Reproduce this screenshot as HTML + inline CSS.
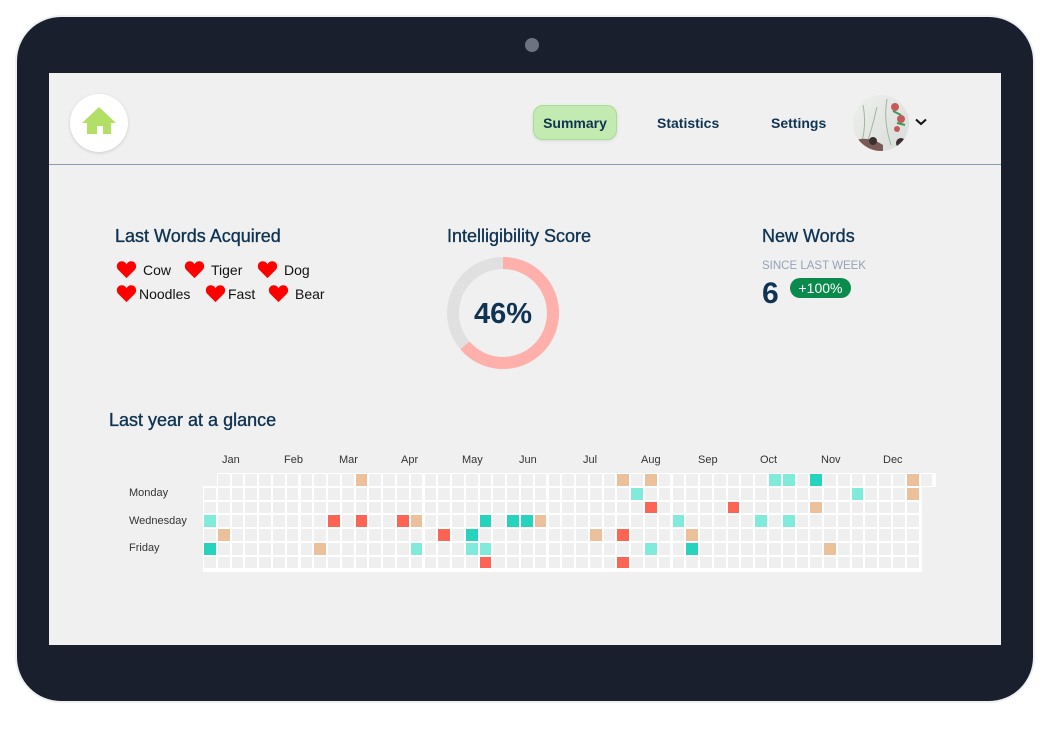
<!DOCTYPE html>
<html><head><meta charset="utf-8"><style>
*{margin:0;padding:0;box-sizing:border-box}
body{width:1059px;height:730px;background:#fff;position:relative;overflow:hidden;font-family:"Liberation Sans",sans-serif;color:#0f3352}
.dev{position:absolute;left:17px;top:17px;width:1016px;height:684px;background:#191f2d;border-radius:44px;box-shadow:0 0 0 2px #eef0f2}
.cam{position:absolute;left:525px;top:38px;width:14px;height:14px;border-radius:50%;background:#6b7280}
.scr{position:absolute;left:49px;top:73px;width:952px;height:572px;background:#f0f0f0}
.hdr{position:absolute;left:0;top:0;width:952px;height:92px;border-bottom:1px solid #8a9bb5}
.home{position:absolute;left:21px;top:21px;width:58px;height:58px;border-radius:50%;background:#fff;box-shadow:0 1px 3px rgba(0,0,0,.15)}
.nav{position:absolute;top:32px;font-weight:bold;font-size:14px;color:#0f3352}
.sum{left:484px;width:84px;height:35px;background:#c3eab0;border:1px solid #a6e090;border-radius:10px;text-align:center;line-height:35px;top:32px;box-shadow:0 1px 3px rgba(0,0,0,.1)}
.av{position:absolute;left:804px;top:22px;width:56px;height:56px;border-radius:50%;overflow:hidden;background:linear-gradient(135deg,#eef0ee,#d8dcd8)}
.t{position:absolute;font-size:18px;color:#0f3352;-webkit-text-stroke:0.35px #0f3352}
.w{position:absolute;font-size:14px;color:#111}
.h{position:absolute}
.lbl{position:absolute;font-size:11px;color:#333}
.mo{position:absolute;font-size:11px;color:#333;top:381px}
.c{position:absolute;width:11.8px;height:11.8px;background:#efefef}
</style></head><body>
<div class="dev"></div>
<div class="cam"></div>
<div class="scr">
 <div class="hdr">
  <div class="home"><svg width="58" height="58" viewBox="0 0 58 58"><path d="M12 29 L29 13 L46 29 L41 29 L41 40 L33 40 L33 32 L27 32 L27 40 L17 40 L17 29Z" fill="#b2df65"/></svg></div>
  <div class="nav sum">Summary</div>
  <div class="nav" style="left:608px;top:42px">Statistics</div>
  <div class="nav" style="left:722px;top:42px">Settings</div>
  <div class="av"><svg width="56" height="56" viewBox="0 0 56 56">
   <path d="M8 50 Q14 30 10 10 M14 48 Q20 30 24 12 M34 4 Q30 25 38 50" stroke="#9fb89a" stroke-width="1" fill="none"/>
   <circle cx="42" cy="12" r="4" fill="#c45a5a"/><circle cx="48" cy="24" r="4" fill="#c45a5a"/><circle cx="44" cy="34" r="3" fill="#c45a5a"/>
   <path d="M40 16 l8 4 M44 28 l8 2" stroke="#3f9a5a" stroke-width="2"/>
   <path d="M0 56 L0 46 Q15 40 30 50 L30 56Z" fill="#7a5a55"/><circle cx="48" cy="48" r="5" fill="#3a3030"/><circle cx="20" cy="46" r="4" fill="#3a3030"/>
  </svg></div>
  <svg style="position:absolute;left:866px;top:45px" width="12" height="8" viewBox="0 0 12 8"><path d="M1 1.5 L6 6 L11 1.5" stroke="#111" stroke-width="2" fill="none"/></svg>
 </div>
 <div class="t" style="left:66px;top:153px">Last Words Acquired</div>
 <svg width="0" height="0" style="position:absolute"><defs><symbol id="hr" viewBox="0 0 24 22"><path d="M12 21 L2.5 11.5 C-0.5 8.5 0.5 2 6 1.5 C9 1.3 11 3 12 5 C13 3 15 1.3 18 1.5 C23.5 2 24.5 8.5 21.5 11.5Z" fill="#f00"/></symbol></defs></svg>
 <svg class="h" style="left:67px;top:187px" width="21" height="19"><use href="#hr"/></svg><div class="w" style="left:94px;top:189px">Cow</div>
 <svg class="h" style="left:135px;top:187px" width="21" height="19"><use href="#hr"/></svg><div class="w" style="left:162px;top:189px">Tiger</div>
 <svg class="h" style="left:208px;top:187px" width="21" height="19"><use href="#hr"/></svg><div class="w" style="left:235px;top:189px">Dog</div>
 <svg class="h" style="left:67px;top:211px" width="21" height="19"><use href="#hr"/></svg><div class="w" style="left:90px;top:213px">Noodles</div>
 <svg class="h" style="left:156px;top:211px" width="21" height="19"><use href="#hr"/></svg><div class="w" style="left:179px;top:213px">Fast</div>
 <svg class="h" style="left:219px;top:211px" width="21" height="19"><use href="#hr"/></svg><div class="w" style="left:246px;top:213px">Bear</div>
 <div class="t" style="left:398px;top:153px">Intelligibility Score</div>
 <svg style="position:absolute;left:398px;top:184px" width="112" height="112" viewBox="0 0 112 112">
  <circle cx="56" cy="56" r="50" fill="none" stroke="#e0e0e0" stroke-width="12"/>
  <circle cx="56" cy="56" r="50" fill="none" stroke="#ffb0ab" stroke-width="12" stroke-dasharray="200 400" transform="rotate(-90 56 56)"/>
  <text x="56" y="66" text-anchor="middle" font-family="Liberation Sans" font-weight="bold" font-size="29" fill="#0f3352">46%</text>
 </svg>
 <div class="t" style="left:713px;top:153px">New Words</div>
 <div style="position:absolute;left:713px;top:187px;font-size:11.5px;color:#94a3b8">SINCE LAST WEEK</div>
 <div style="position:absolute;left:713px;top:204px;font-size:30px;font-weight:bold;color:#0f3352">6</div>
 <div style="position:absolute;left:741px;top:205px;width:61px;height:20px;border-radius:10px;background:#0b8a4e;color:#fff;font-size:14px;text-align:center;line-height:20px">+100%</div>
 <div class="t" style="left:60px;top:337px">Last year at a glance</div>
 <div class="lbl" style="left:80px;top:414px">Monday</div>
 <div class="lbl" style="left:80px;top:442px">Wednesday</div>
 <div class="lbl" style="left:80px;top:469px">Friday</div>
 <div class="mo" style="left:173px">Jan</div><div class="mo" style="left:235px">Feb</div><div class="mo" style="left:290px">Mar</div><div class="mo" style="left:352px">Apr</div><div class="mo" style="left:413px">May</div><div class="mo" style="left:470px">Jun</div><div class="mo" style="left:534px">Jul</div><div class="mo" style="left:592px">Aug</div><div class="mo" style="left:649px">Sep</div><div class="mo" style="left:711px">Oct</div><div class="mo" style="left:772px">Nov</div><div class="mo" style="left:834px">Dec</div>
 <div style="position:absolute;left:168px;top:400px;width:719px;height:14px;background:#fff"></div>
 <div style="position:absolute;left:154px;top:413px;width:719px;height:86px;background:#fff"></div>
 <div id="g"></div>
</div>
<script>
var P='#edc09c',R='#fe6454',T='#26d4bd',L='#80ebda';
var m={'0,11':P,'0,30':P,'0,32':P,'0,41':L,'0,42':L,'0,44':T,'0,51':P,
'1,31':L,'1,47':L,'1,51':P,'2,32':R,'2,38':R,'2,44':P,
'3,0':L,'3,9':R,'3,11':R,'3,14':R,'3,15':P,'3,20':T,'3,22':T,'3,23':T,'3,24':P,'3,34':L,'3,40':L,'3,42':L,
'4,1':P,'4,17':R,'4,19':T,'4,28':P,'4,30':R,'4,35':P,
'5,0':T,'5,8':P,'5,15':L,'5,19':L,'5,20':L,'5,32':L,'5,35':T,'5,45':P,'6,20':R,'6,30':R};
var h='';
for(var r=0;r<7;r++){for(var c=(r==0?1:0);c<(r==0?53:52);c++){
var x=155+c*13.78,y=401+r*13.75;var col=m[r+','+c]||'#efefef';
h+='<div class="c" style="left:'+x.toFixed(1)+'px;top:'+y.toFixed(1)+'px;background:'+col+'"></div>';}}
document.getElementById('g').innerHTML=h;
</script>
</body></html>
